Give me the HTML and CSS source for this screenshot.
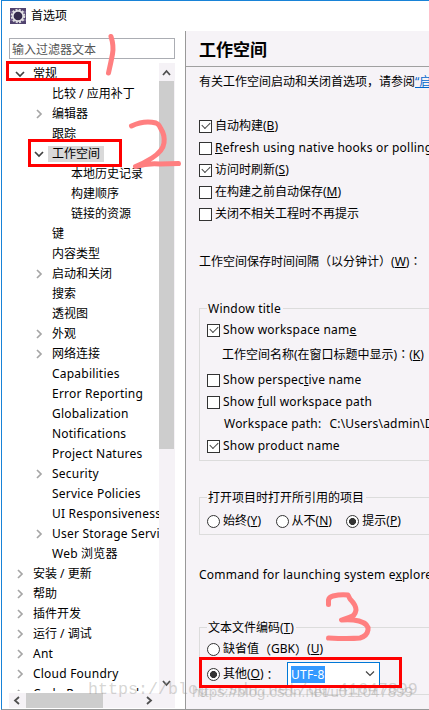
FILE: index.html
```html
<!DOCTYPE html>
<html lang="zh-CN">
<head>
    <meta charset="UTF-8">
    <meta name="viewport" content="width=device-width, initial-scale=1.0">
    <title>首选项</title>
    <link rel="stylesheet" href="styles.css">
</head>
<body>
    <div class="window">
        <header class="titlebar">
            <svg class="logo" width="16" height="16" viewBox="0 0 16 16">
                <rect width="16" height="16" fill="#51436f"/>
                <path d="M0 4h3M0 12h3M13 4h3M13 12h3" stroke="#8b7ba6"/>
                <circle cx="8" cy="8" r="6.3" fill="none" stroke="#ddd" stroke-width="2" stroke-dasharray="2 1.3"/>
                <circle cx="8" cy="8" r="5.2" fill="#352b4c" stroke="#e4e2e6" stroke-width="1.7"/>
            </svg>
            <span>首选项</span>
        </header>
        <div class="content">
            <aside class="sidebar">
                <input class="filter" type="text" placeholder="输入过滤器文本">
                <div class="tree-box">
                    <ul class="tree" id="tree"></ul>
                    <div class="vscroll">
                        <svg width="15" height="18"><path d="M4 12l3.500-4 3.500 4" class="arrow"/></svg>
                        <div class="vthumb"></div>
                        <svg class="down" width="15" height="18"><path d="M4 6l3.500 4 3.500-4" class="arrow"/></svg>
                    </div>
                    <div class="hscroll">
                        <svg width="17" height="15"><path d="M10 4l-4 3.500 4 3.500" class="arrow"/></svg>
                        <div class="hthumb"></div>
                        <svg class="next" width="17" height="15"><path d="M6 4l4 3.500-4 3.500" class="arrow"/></svg>
                    </div>
                </div>
            </aside>
            <main class="page">
                <h1>工作空间</h1>
                <div class="form">
                    <p class="intro">有关工作空间启动和关闭首选项，请参阅<a href="#">“启动和关闭”</a>。</p>
                    <div class="checks">
                        <label class="check on">自动构建(<u>B</u>)</label>
                        <label class="check latin"><u>R</u>efresh using native hooks or polling</label>
                        <label class="check on">访问时刷新(<u>S</u>)</label>
                        <label class="check">在构建之前自动保存(<u>M</u>)</label>
                        <label class="check">关闭不相关工程时不再提示</label>
                    </div>
                    <p class="interval">工作空间保存时间间隔<span class="fw" lang="zh-TW">（</span>以分钟计<span class="fw" lang="zh-TW">）</span>(<u>W</u>)<span class="fw" lang="zh-TW">：</span></p>
                    <section class="group title-group">
                        <h2 class="latin">Window title</h2>
                        <label class="check latin on">Show workspace nam<u>e</u></label>
                        <p class="name-row">工作空间名称(在窗口标题中显示)<span class="fw" lang="zh-TW">：</span>(<u>K</u>)</p>
                        <label class="check latin">Show perspec<u>t</u>ive name</label>
                        <label class="check latin">Show <u>f</u>ull workspace path</label>
                        <p class="path-row latin">Workspace path:<span>C:\Users\admin\Desktop</span></p>
                        <label class="check latin on">Show product name</label>
                    </section>
                    <section class="group open-group">
                        <h2>打开项目时打开所引用的项目</h2>
                        <div class="radios">
                            <label class="radio">始终(<u>Y</u>)</label>
                            <label class="radio">从不(<u>N</u>)</label>
                            <label class="radio on">提示(<u>P</u>)</label>
                        </div>
                    </section>
                    <p class="command latin">Command for launching system e<u>x</u>plorer:</p>
                    <section class="group encoding">
                        <h2>文本文件编码(<u>T</u>)</h2>
                        <label class="radio">缺省值<span class="fw" lang="zh-TW">（</span>GBK<span class="fw" lang="zh-TW">）</span>(<u>U</u>)</label>
                        <div class="other">
                            <label class="radio on">其他(<u>O</u>)<span class="fw" lang="zh-TW">：</span></label>
                            <div class="combo">
                                <span class="latin">UTF-8</span>
                                <svg width="10" height="6"><path d="M1 .5l4 4 4-4" fill="none" stroke="#444" stroke-width="1.200"/></svg>
                            </div>
                        </div>
                    </section>
                </div>
            </main>
        </div>
    </div>

    <div class="watermark wm-mono">https://blog.csdn.net/qq_41647899</div>
    <div class="watermark wm-sans">https://blog.csdn.net/u011047899</div>

    <svg class="marks" width="429" height="710">
        <g class="boxes">
            <rect x="7.500" y="62.500" width="82" height="17"/>
            <rect x="29.500" y="140.500" width="91" height="25"/>
            <rect x="200.500" y="658.500" width="200" height="28"/>
        </g>
        <g class="pen">
            <path d="M111 36.500Q114 46 112.500 54T108.500 73"/>
            <path d="M131.500 126Q144 120 156 123Q159 124 161 129Q165 135 164 143Q163 151 152 158Q144 163 135.500 166.500Q147 163 160 164L178.500 163.500"/>
            <path d="M328.500 604.500V600Q329 597 333 596Q341 594 348 595L350 599Q356 605 356 610Q355 616 350 617L341.500 620Q351 619 359 621Q369 624 368 630Q367 636 360 638Q349 639 328.500 638"/>
        </g>
    </svg>

    <script>
        // level, label, state ("+" collapsed, "-" expanded)
        const items = [
            [0, "常规", "-"],
            [1, "比较 / 应用补丁"],
            [1, "编辑器", "+"],
            [1, "跟踪"],
            [1, "工作空间", "-"],
            [2, "本地历史记录"],
            [2, "构建顺序"],
            [2, "链接的资源"],
            [1, "键"],
            [1, "内容类型"],
            [1, "启动和关闭", "+"],
            [1, "搜索"],
            [1, "透视图"],
            [1, "外观", "+"],
            [1, "网络连接", "+"],
            [1, "Capabilities"],
            [1, "Error Reporting"],
            [1, "Globalization"],
            [1, "Notifications"],
            [1, "Project Natures"],
            [1, "Security", "+"],
            [1, "Service Policies"],
            [1, "UI Responsiveness Monitoring"],
            [1, "User Storage Service", "+"],
            [1, "Web 浏览器"],
            [0, "安装 / 更新", "+"],
            [0, "帮助", "+"],
            [0, "插件开发", "+"],
            [0, "运行 / 调试", "+"],
            [0, "Ant", "+"],
            [0, "Cloud Foundry", "+"],
            [0, "Code Recommenders", "+"]
        ];
        const arrows = {
            "+": '<path d="M4 2l4 4-4 4" fill="none" stroke="#a6a6a6" stroke-width="1.700"/>',
            "-": '<path d="M2 4l4 4 4-4" fill="none" stroke="#404040" stroke-width="1.700"/>'
        };

        document.getElementById("tree").innerHTML = items.map(([level, label, state]) => {
            const classes = [];
            if (label === "工作空间") classes.push("selected");
            if (/^[A-Za-z]/.test(label)) classes.push("latin");
            return `
            <li class="level${level}">
                <svg width="12" height="12">${arrows[state] || ""}</svg>
                <span class="${classes.join(" ")}">${label}</span>
            </li>`;
        }).join("");
    </script>
</body>
</html>
```
FILE: styles.css
```css
*, *::before, *::after {
    box-sizing: border-box;
}
body {
    margin: 0;
    width: 429px;
    height: 710px;
    overflow: hidden;
    background: #fff;
    color: #000;
    font-family: "Noto Sans", "Noto Sans CJK SC", sans-serif;
    font-size: 12px;
    line-height: 20px;
}
h1, h2, p, ul {
    margin: 0;
    padding: 0;
    font-weight: normal;
}
.latin {
    letter-spacing: 0.22px;
}
.window {
    height: 710px;
    margin-left: 1px;
    display: flex;
    flex-direction: column;
    border-top: 1px solid #1883d7;
    border-left: 1px solid #1883d7;
    border-bottom: 1px solid #999;
}
.titlebar {
    height: 30px;
    padding: 0 0 1px 8px;
    display: flex;
    align-items: center;
    gap: 5px;
}
.content {
    flex: 1;
    display: flex;
    min-height: 0;
}
.sidebar {
    width: 184px;
    flex: none;
    padding: 7px 0 0 7px;
    border-right: 1px solid #999;
}
.filter {
    display: block;
    width: 166px;
    height: 21px;
    padding: 1px 2px 0;
    border: 1px solid #abadb3;
    font: inherit;
}
.filter::placeholder {
    color: #555;
    opacity: 1;
}
.tree-box {
    width: 166px;
    height: 645px;
    margin-top: 4px;
    display: grid;
    grid-template-columns: 150px 16px;
    grid-template-rows: 630px 15px;
}
.tree {
    height: 628px;
    padding-top: 1px;
    list-style: none;
    overflow: hidden;
    white-space: nowrap;
}
.tree li {
    height: 20px;
    display: flex;
    align-items: center;
}
.tree svg {
    flex: none;
    margin-right: 5px;
}
.tree span {
    height: 16px;
    line-height: 16px;
    padding: 0 2px;
}
.tree .selected {
    background: #d9d9d9;
    padding: 0 4px;
    margin-left: -2px;
}
.level0 {
    padding-left: 5px;
}
.level1 {
    padding-left: 24px;
}
.level2 {
    padding-left: 43px;
}
.vscroll, .hscroll {
    background: #f5f2f6;
    display: flex;
}
.vscroll {
    flex-direction: column;
}
.hscroll {
    grid-column: 1 / 3;
}
.vthumb {
    width: 15px;
    height: 368px;
    background: #cdcdcd;
}
.hthumb {
    width: 77px;
    height: 15px;
    background: #cdcdcd;
}
.down {
    margin-top: auto;
}
.next {
    margin-left: auto;
    margin-right: 17px;
}
.arrow {
    fill: none;
    stroke: #505050;
    stroke-width: 1.8;
}
.page {
    flex: 1;
    min-width: 0;
    overflow: hidden;
    background: #f6f3f7;
    white-space: nowrap;
}
h1 {
    height: 36px;
    padding-left: 13px;
    border-bottom: 1px solid #a0a0a0;
    font-size: 17px;
    line-height: 37px;
    font-weight: bold;
}
.form {
    padding-left: 13px;
}
.intro {
    height: 20px;
    margin-top: 5px;
}
a {
    color: #0066cc;
}
u {
    text-underline-offset: 1px;
}
.checks {
    margin-top: 23px;
}
.check, .radio {
    position: relative;
    height: 22px;
    line-height: 22px;
    display: flex;
    align-items: center;
}
.check {
    white-space: pre;
}
.check::before, .radio::before {
    content: "";
    width: 13px;
    height: 13px;
    flex: none;
    margin-right: 3px;
    border: 1px solid #333;
    background: #fff;
}
.check.on::after {
    content: "";
    position: absolute;
    left: 3px;
    top: 7px;
    width: 8px;
    height: 5px;
    border-left: 1.5px solid #444;
    border-bottom: 1.5px solid #444;
    transform: rotate(-45deg);
}
.radio::before {
    border-radius: 50%;
}
.radio.on::before {
    background: radial-gradient(circle, #333 3.2px, #fff 3.8px);
}
/* full-width punctuation sits in the middle of its cell */
.fw {
    font-family: "Noto Sans CJK TC", sans-serif;
    line-height: 1px;
    text-spacing-trim: space-all;
}
.interval {
    height: 20px;
    margin-top: 27px;
    text-spacing-trim: space-all;
}
.group {
    border: 1px solid #dcdcdc;
    border-right: 0;
    padding-left: 7px;
}
.group h2 {
    width: max-content;
    height: 20px;
    margin-top: -10px;
    padding: 0 2px 0 1px;
    background: #f6f3f7;
    font-size: 12px;
}
.title-group {
    height: 153px;
    margin-top: 36px;
}
.name-row {
    height: 28px;
    padding-left: 15px;
    line-height: 28px;
}
.path-row {
    height: 22px;
    padding-left: 17px;
    line-height: 22px;
    display: flex;
    gap: 8px;
}
.open-group {
    height: 38px;
    margin-top: 36px;
}
.radios {
    display: flex;
    gap: 14.5px;
    padding-top: 2px;
}
.command {
    margin-top: 30px;
}
.encoding {
    height: 68px;
    margin-top: 42px;
}
.other {
    display: flex;
    align-items: center;
    margin-top: 2px;
}
.other .radio {
    width: 68px;
}
.combo {
    width: 93px;
    height: 24px;
    margin-left: 12px;
    padding: 0 4px 0 3px;
    border: 1px solid #0078d7;
    background: #fff;
    display: flex;
    align-items: center;
    justify-content: space-between;
}
.combo span {
    height: 17px;
    line-height: 17px;
    background: #3399ff;
    color: #fff;
}
.marks {
    position: absolute;
    left: 0;
    top: 0;
}
.boxes {
    fill: none;
    stroke: #ff0000;
    stroke-width: 3;
}
.pen {
    fill: none;
    stroke: #ff7f80;
    stroke-width: 5;
    stroke-linecap: round;
    stroke-linejoin: round;
}
.watermark {
    position: absolute;
    color: rgba(150, 150, 145, 0.4);
    white-space: nowrap;
}
.wm-mono {
    left: 88px;
    top: 680px;
    font-family: "Liberation Mono", monospace;
    font-size: 16.67px;
}
.wm-sans {
    left: 192px;
    top: 682px;
    font-family: "Liberation Sans", sans-serif;
    font-size: 15px;
}
```
